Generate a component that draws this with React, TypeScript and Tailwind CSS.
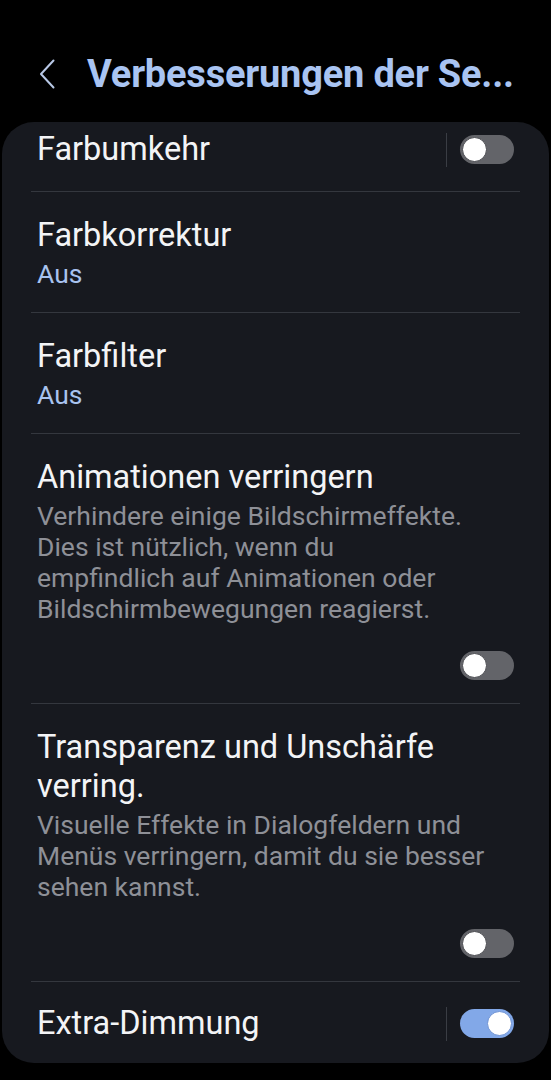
import React from 'react';

const Toggle = ({ on = false }: { on?: boolean }) => (
  <div
    className={`w-[54px] h-[29px] rounded-full flex items-center px-[2px] ${
      on ? 'bg-[#82a8e8] justify-end' : 'bg-[#636469] justify-start'
    }`}
  >
    <div
      className={`w-[25px] h-[25px] rounded-full bg-white border ${
        on ? 'border-[#6f93d4]' : 'border-[#4a4b50]'
      }`}
    />
  </div>
);

const Divider = () => <div className="h-px bg-[#34373e]" />;

export default function App() {
  return (
    <div
      className="w-[551px] h-[1080px] bg-black overflow-hidden"
      style={{ fontFamily: 'Roboto, "Noto Sans", sans-serif' }}
    >
      {/* Kopfzeile */}
      <header className="h-[122px] pt-[26px] flex items-center">
        <svg width="16" height="30" viewBox="0 0 16 30" className="ml-[39px]" fill="none">
          <path d="M14.5 1.5 L2 15 L14.5 28.5" stroke="#b8c8e6" strokeWidth="2" strokeLinecap="round" strokeLinejoin="round" />
        </svg>
        <h1 className="ml-[32px] text-[38px] leading-[44px] font-bold text-[#a9c4f2] tracking-[-0.2px] whitespace-nowrap">
          Verbesserungen der Se...
        </h1>
      </header>

      {/* Karte mit Einstellungen */}
      <div className="mx-[2px] h-[941px] rounded-[32px] bg-[#17191f] px-[29px] overflow-hidden">
        {/* Farbumkehr (oben angeschnitten) */}
        <div className="h-[69px] pb-[14px] px-[6px] flex items-center">
          <span className="flex-1 text-[32.5px] leading-[39px] text-[#f3f4f6]">Farbumkehr</span>
          <div className="w-px h-[34px] bg-[#3a3d44] mr-[13px]" />
          <Toggle />
        </div>
        <Divider />

        <div className="px-[6px] pt-[24px] pb-[23px]">
          <div className="text-[32.5px] leading-[39px] text-[#f3f4f6]">Farbkorrektur</div>
          <div className="mt-[3px] text-[26.5px] leading-[31px] text-[#a8c3ef]">Aus</div>
        </div>
        <Divider />

        <div className="px-[6px] pt-[24px] pb-[23px]">
          <div className="text-[32.5px] leading-[39px] text-[#f3f4f6]">Farbfilter</div>
          <div className="mt-[3px] text-[26.5px] leading-[31px] text-[#a8c3ef]">Aus</div>
        </div>
        <Divider />

        <div className="px-[6px] pt-[24px] pb-[23px]">
          <div className="text-[32.5px] leading-[39px] text-[#f3f4f6]">Animationen verringern</div>
          <p className="mt-[3px] text-[26.5px] leading-[31px] text-[#8e9097]">
            Verhindere einige Bildschirmeffekte.
            <br />
            Dies ist nützlich, wenn du
            <br />
            empfindlich auf Animationen oder
            <br />
            Bildschirmbewegungen reagierst.
          </p>
          <div className="mt-[27px] flex justify-end">
            <Toggle />
          </div>
        </div>
        <Divider />

        <div className="px-[6px] pt-[24px] pb-[23px]">
          <div className="text-[32.5px] leading-[39px] text-[#f3f4f6]">
            Transparenz und Unschärfe
            <br />
            verring.
          </div>
          <p className="mt-[3px] text-[26.5px] leading-[31px] text-[#8e9097]">
            Visuelle Effekte in Dialogfeldern und
            <br />
            Menüs verringern, damit du sie besser
            <br />
            sehen kannst.
          </p>
          <div className="mt-[27px] flex justify-end">
            <Toggle />
          </div>
        </div>
        <Divider />

        {/* Extra-Dimmung */}
        <div className="h-[83px] px-[6px] flex items-center">
          <span className="flex-1 text-[32.5px] leading-[39px] text-[#f3f4f6]">Extra-Dimmung</span>
          <div className="w-px h-[34px] bg-[#3a3d44] mr-[13px]" />
          <Toggle on />
        </div>
      </div>
    </div>
  );
}
